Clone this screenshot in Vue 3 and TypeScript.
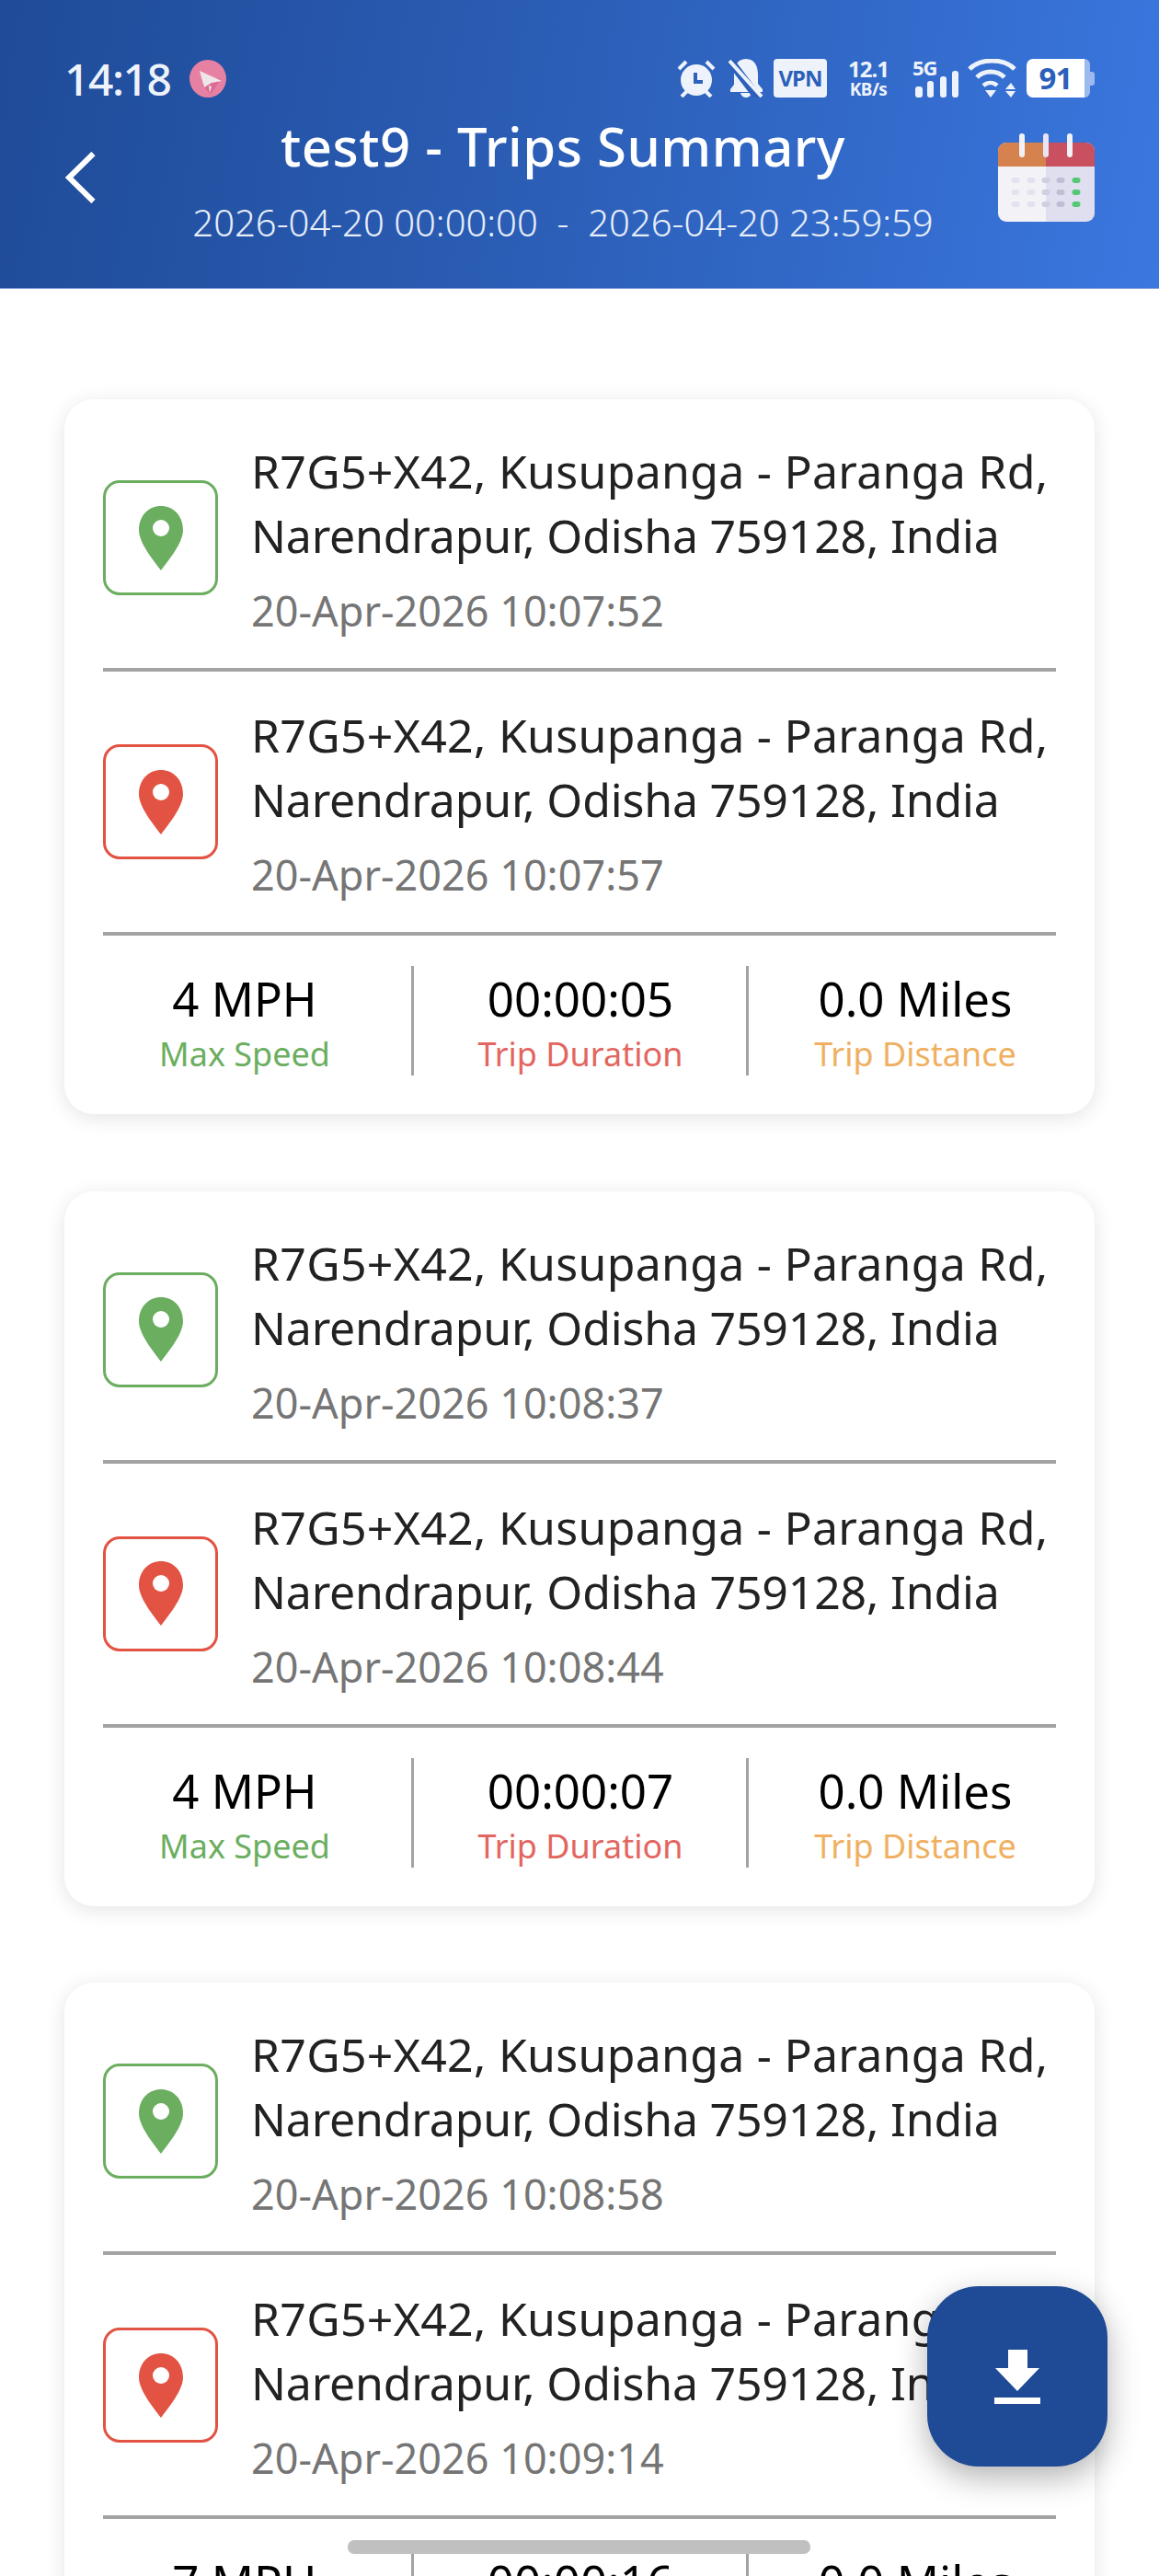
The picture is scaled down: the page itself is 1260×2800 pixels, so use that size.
<script setup lang="ts">
interface Trip {
  start: string;
  end: string;
  speed: string;
  duration: string;
  distance: string;
}

const address = ["R7G5+X42, Kusupanga - Paranga Rd,", "Narendrapur, Odisha 759128, India"];

const trips: Trip[] = [
  { start: "20-Apr-2026 10:07:52", end: "20-Apr-2026 10:07:57", speed: "4 MPH", duration: "00:00:05", distance: "0.0 Miles" },
  { start: "20-Apr-2026 10:08:37", end: "20-Apr-2026 10:08:44", speed: "4 MPH", duration: "00:00:07", distance: "0.0 Miles" },
  { start: "20-Apr-2026 10:08:58", end: "20-Apr-2026 10:09:14", speed: "7 MPH", duration: "00:00:16", distance: "0.0 Miles" },
];

const calendarCols = [19, 36, 52, 68, 85];
const calendarRows = [51, 64, 77];
const dotColors = ["#e3e2ef", "#e3e2ef", "#d0cfe0", "#c0bed5", "#55c878"];
</script>

<template>
  <div class="page">
    <header class="header">
      <div class="status-bar">
        <span class="clock">14:18</span>
        <svg class="app-dot" width="40" height="41" viewBox="0 0 40 41">
          <ellipse cx="20" cy="20.5" rx="20" ry="20.5" fill="#e781a3" />
          <path d="M23 38 L13 27 L34 21 Z" fill="#dd6a94" />
          <path d="M11 12 L35 23 L24 25 L16 30 Z" fill="#eee6ea" />
          <path d="M21 28 L24 29 L22 36 Z" fill="#eee6ea" />
        </svg>
        <div class="status-right">
          <svg width="42" height="42" viewBox="0 0 42 42">
            <circle cx="21" cy="23" r="17" fill="#eef3fb" />
            <path d="M20 15 V25 H28" fill="none" stroke="#2c62be" stroke-width="4" />
            <path d="M2 11 L10 3 M40 11 L32 3 M5 41 L11 35 M37 41 L31 35" stroke="#eef3fb" stroke-width="4" />
          </svg>
          <svg class="bell" width="38" height="42" viewBox="0 0 38 42">
            <path d="M19 0 C29 0 32 9 32 17 V27 L37 33 V36 H2 V33 L6 28 V17 C6 9 9 0 19 0 Z" fill="#eef3fb" />
            <path d="M13 37 H25 C24 41 21 42 19 42 C17 42 14 41 13 37 Z" fill="#eef3fb" />
            <path d="M-3 -4 L35 46" stroke="#2b5fb9" stroke-width="9" />
            <path d="M1 2 L36 41" stroke="#eef3fb" stroke-width="4" />
          </svg>
          <span class="vpn">VPN</span>
          <span class="speed"><b>12.1</b><i>KB/s</i></span>
          <div class="signal">
            <span class="five-g">5G</span>
            <svg width="47" height="29" viewBox="0 0 47 29">
              <rect x="0" y="17" width="8" height="12" rx="3" fill="#eef3fb" />
              <rect x="13" y="11" width="7" height="18" rx="3" fill="#eef3fb" />
              <rect x="27" y="6" width="7" height="23" rx="3" fill="#eef3fb" />
              <rect x="40" y="0" width="7" height="29" rx="3" fill="#eef3fb" />
            </svg>
          </div>
          <svg width="53" height="42" viewBox="0 0 53 42">
            <path d="M2 11 C14 -1 39 -1 51 11" fill="none" stroke="#eef3fb" stroke-width="5" />
            <path d="M10 20 C18 12 32 12 40 20" fill="none" stroke="#eef3fb" stroke-width="5" />
            <path d="M17 29 C22 25 28 25 32 29" fill="none" stroke="#eef3fb" stroke-width="4.5" />
            <path d="M19 34 H31 L25 42 Z" fill="#eef3fb" />
            <path d="M47 26 L52 33 H41 Z M41 35 H52 L47 42 Z" fill="#eef3fb" />
          </svg>
          <div class="battery">
            <span class="battery-level">91</span>
            <span class="battery-rest"></span>
            <span class="battery-nub"></span>
          </div>
        </div>
      </div>

      <div class="nav">
        <button class="back" type="button">
          <svg width="33" height="56" viewBox="0 0 33 56">
            <path d="M30.5 2 L4 28 L30.5 54" fill="none" stroke="#fff" stroke-width="6" />
          </svg>
        </button>
        <div class="heading">
          <h1>test9 - Trips Summary</h1>
          <p>2026-04-20 00:00:00 &nbsp;-&nbsp; 2026-04-20 23:59:59</p>
        </div>
        <svg class="calendar" width="105" height="96" viewBox="0 0 105 96">
          <path d="M52 10 H9 A9 9 0 0 0 0 19 V87 A9 9 0 0 0 9 96 H52 Z" fill="#f3f3f7" />
          <path d="M52 10 H96 A9 9 0 0 1 105 19 V87 A9 9 0 0 1 96 96 H52 Z" fill="#e0dfef" />
          <path d="M52 10 H9 A9 9 0 0 0 0 19 V36 H52 Z" fill="#d6824f" />
          <path d="M52 10 H96 A9 9 0 0 1 105 19 V36 H52 Z" fill="#c9505e" />
          <rect x="23" y="0" width="6" height="26" rx="3" fill="#f1f1f6" />
          <rect x="49" y="0" width="6" height="26" rx="3" fill="#e6e5f1" />
          <rect x="75" y="0" width="6" height="26" rx="3" fill="#f1f1f6" />
          <template v-for="y in calendarRows" :key="y">
            <rect
              v-for="(x, i) in calendarCols"
              :key="x"
              :x="x - 4.5"
              :y="y - 3"
              width="9"
              height="6"
              rx="3"
              :fill="dotColors[i]"
            />
          </template>
        </svg>
      </div>
    </header>

    <main class="list">
      <section v-for="trip in trips" :key="trip.start" class="card">
        <div class="stop">
          <div class="pin-box green">
            <svg width="48" height="70" viewBox="0 0 48 70">
              <path d="M24 0 C37 0 48 10 48 26 C48 40 33 58 24 70 C15 58 0 40 0 26 C0 10 11 0 24 0 Z" fill="currentColor" />
              <circle cx="24" cy="24" r="9" fill="#fff" />
            </svg>
          </div>
          <div class="stop-text">
            <div class="address line-one">{{ address[0] }}</div>
            <div class="address line-two">{{ address[1] }}</div>
            <div class="time">{{ trip.start }}</div>
          </div>
        </div>
        <div class="stop">
          <div class="pin-box red">
            <svg width="48" height="70" viewBox="0 0 48 70">
              <path d="M24 0 C37 0 48 10 48 26 C48 40 33 58 24 70 C15 58 0 40 0 26 C0 10 11 0 24 0 Z" fill="currentColor" />
              <circle cx="24" cy="24" r="9" fill="#fff" />
            </svg>
          </div>
          <div class="stop-text">
            <div class="address line-one">{{ address[0] }}</div>
            <div class="address line-two">{{ address[1] }}</div>
            <div class="time">{{ trip.end }}</div>
          </div>
        </div>
        <div class="stats">
          <div class="stat">
            <div class="stat-value">{{ trip.speed }}</div>
            <div class="stat-label label-green">Max Speed</div>
          </div>
          <div class="stat">
            <div class="stat-value">{{ trip.duration }}</div>
            <div class="stat-label label-red">Trip Duration</div>
          </div>
          <div class="stat">
            <div class="stat-value">{{ trip.distance }}</div>
            <div class="stat-label label-orange">Trip Distance</div>
          </div>
        </div>
      </section>
    </main>

    <button class="fab" type="button">
      <svg width="50" height="59" viewBox="0 0 50 59">
        <path d="M15 0 H36 V20 H49 L25 45 L1 20 H15 Z" fill="#fff" />
        <rect x="0" y="52" width="50" height="7" fill="#fff" />
      </svg>
    </button>
    <div class="home-handle"></div>
  </div>
</template>

<style scoped>
.page {
  position: relative;
  width: 1260px;
  height: 2800px;
  overflow: hidden;
  background: #fff;
  font-family: "Noto Sans", "Open Sans", sans-serif;
}

.header {
  height: 314px;
  box-sizing: border-box;
  padding: 64px 70px 0 71px;
  background: linear-gradient(100deg, #1f4b98 0%, #2c5fb8 50%, #3a77df 100%);
  border-bottom: 1px solid #7b9cd6;
  color: #fff;
}

.status-bar {
  display: flex;
  align-items: center;
  height: 42px;
}

.clock {
  margin-left: -1px;
  font-size: 48px;
  font-weight: 500;
  color: #eef3fb;
  letter-spacing: -1.5px;
}

.app-dot {
  margin-left: 21px;
}

.status-right {
  display: flex;
  align-items: center;
  margin-left: auto;
}

.bell {
  margin-left: 14px;
}

.vpn {
  width: 58px;
  height: 42px;
  margin-left: 11px;
  border-radius: 4px;
  background: #eef3fb;
  color: #2b5fb9;
  font-size: 24px;
  font-weight: 700;
  letter-spacing: -1px;
  line-height: 42px;
  text-align: center;
}

.speed {
  display: flex;
  flex-direction: column;
  align-items: center;
  width: 52px;
  margin-left: 19px;
  color: #eef3fb;
}

.speed b {
  font-size: 24px;
  line-height: 24px;
  letter-spacing: -1px;
}

.speed i {
  font-size: 19px;
  font-style: normal;
  font-weight: 700;
  line-height: 20px;
  letter-spacing: -0.5px;
}

.signal {
  position: relative;
  width: 47px;
  height: 42px;
  margin-left: 22px;
}

.signal svg {
  position: absolute;
  left: 3px;
  bottom: 0;
}

.five-g {
  position: absolute;
  left: 0;
  top: -4px;
  font-size: 22px;
  font-weight: 700;
  line-height: 26px;
  letter-spacing: -1px;
  color: #eef3fb;
}

.signal + svg {
  margin-left: 13px;
}

.battery {
  display: flex;
  align-items: center;
  position: relative;
  margin-left: 11px;
  height: 42px;
}

.battery-level {
  width: 63px;
  height: 42px;
  border-radius: 7px 0 0 7px;
  background: #fff;
  color: #2b5fb9;
  font-size: 33px;
  font-weight: 700;
  line-height: 42px;
  letter-spacing: -1px;
  text-align: center;
}

.battery-rest {
  width: 6px;
  height: 42px;
  border-radius: 0 6px 6px 0;
  background: #9db9ee;
}

.battery-nub {
  width: 5px;
  height: 15px;
  border-radius: 0 3px 3px 0;
  background: #9db9ee;
}

.nav {
  display: flex;
  align-items: flex-start;
  margin-top: 39px;
}

.back {
  width: 68px;
  height: 56px;
  margin-top: 20px;
  padding: 0;
  border: 0;
  background: none;
  text-align: left;
}

.heading {
  flex: 1;
  text-align: center;
}

.heading h1 {
  margin: -21px 0 0;
  font-size: 58px;
  font-weight: 500;
  line-height: 70px;
  letter-spacing: 0.5px;
}

.heading p {
  margin: 26px 0 0;
  font-size: 40px;
  font-weight: 300;
  line-height: 44px;
  color: #e8eefa;
}

.list {
  display: flex;
  flex-direction: column;
  gap: 83.5px;
  padding: 120px 70px 0;
}

.card {
  flex: none;
  height: 777px;
  box-sizing: border-box;
  padding: 0 42px;
  border-radius: 32px;
  background: #fff;
  box-shadow: 0 4px 22px rgba(0, 0, 0, 0.11);
}

.stop {
  display: flex;
  align-items: center;
  gap: 36px;
  height: 287px;
  box-sizing: border-box;
  border-bottom: 4px solid #a3a3a3;
}

.stop:first-child {
  height: 296px;
  padding-top: 9px;
}

.pin-box {
  display: flex;
  align-items: center;
  justify-content: center;
  flex: none;
  width: 125px;
  height: 125px;
  box-sizing: border-box;
  border: 3px solid currentColor;
  border-radius: 18px;
}

.pin-box.green {
  color: #6bae60;
}

.pin-box.red {
  color: #e25343;
}

.stop-text {
  padding-top: 2px;
}

.address {
  font-size: 50px;
  line-height: 70px;
  color: #222;
  white-space: nowrap;
}

.line-one {
  letter-spacing: 0.27px;
}

.line-two {
  letter-spacing: -0.2px;
}

.time {
  margin-top: 17px;
  font-size: 45px;
  line-height: 60px;
  color: #757575;
  white-space: nowrap;
}

.stats {
  display: grid;
  grid-template-columns: repeat(3, 1fr);
  margin: 33px -28px 0;
}

.stat {
  height: 119px;
  text-align: center;
}

.stat + .stat {
  margin-left: -1px;
  border-left: 3px solid #a3a3a3;
}

.stat-value {
  font-size: 51px;
  line-height: 70px;
  color: #000;
}

.stat-label {
  margin-top: 3px;
  font-size: 36px;
  line-height: 46px;
}

.label-green {
  color: #6bae60;
}

.label-red {
  color: #e2665f;
}

.label-orange {
  color: #efb061;
}

.fab {
  position: absolute;
  left: 1008px;
  top: 2485px;
  display: flex;
  align-items: center;
  justify-content: center;
  width: 196px;
  height: 196px;
  padding: 0;
  border: 0;
  border-radius: 56px;
  background: #1f4a96;
  box-shadow: 0 12px 34px rgba(0, 0, 0, 0.3);
}

.home-handle {
  position: absolute;
  left: 378px;
  top: 2761px;
  width: 503px;
  height: 15px;
  border-radius: 7px;
  background: #c0c0c0;
}
</style>
